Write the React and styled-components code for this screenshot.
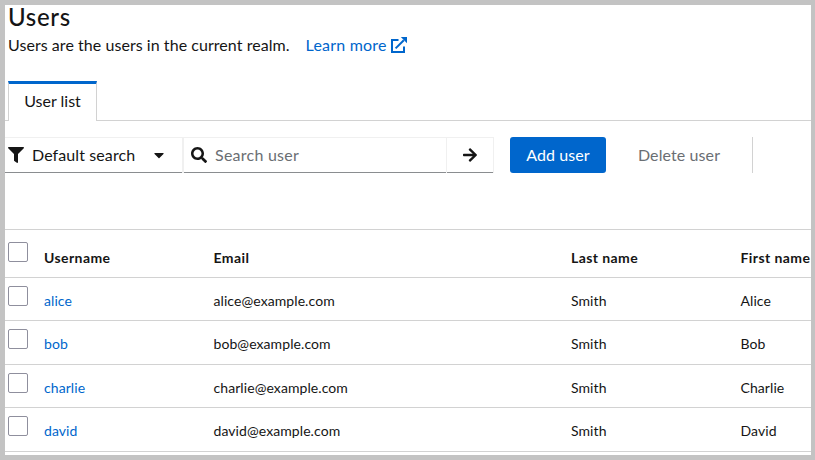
import React from "react";
import styled, { createGlobalStyle } from "styled-components";
import { FaFilter, FaCaretDown, FaSearch, FaArrowRight } from "react-icons/fa";

const GlobalStyle = createGlobalStyle`
  * { box-sizing: border-box; }
  body { margin: 0; background: #fff; color: #151515; font: 16px/24px Lato, sans-serif; }
`;

const Frame = styled.main`
  width: 815px;
  height: 460px;
  border: 5px solid #c3c3c3;
  border-right-width: 4px;
  background: #fff;
  overflow: hidden;
  white-space: nowrap;
`;

const Header = styled.header`
  height: 76px;
  padding-left: 3px;
`;

const Title = styled.h1`
  margin: 0;
  height: 27px;
  font-size: 24px;
  font-weight: 500;
  line-height: 24px;
  letter-spacing: 0.7px;
`;

const Description = styled.p`
  margin: 0;
  display: flex;
  align-items: center;
  line-height: 25px;
  letter-spacing: 0.05px;
`;

const LearnMore = styled.a`
  display: flex;
  align-items: center;
  gap: 4px;
  margin-left: 16px;
  color: #06c;
  letter-spacing: 0.2px;
  svg { display: block; }
`;

const Tabs = styled.nav`
  display: flex;
  height: 40px;
  padding-left: 3px;
  box-shadow: inset 0 -1px #d2d2d2;
`;

const Tab = styled.div`
  width: 89px;
  border: 1px solid #d2d2d2;
  border-top: 3px solid #06c;
  border-bottom: 0;
  background: #fff;
  text-align: center;
  line-height: 33px;
`;

const Toolbar = styled.div`
  display: flex;
  height: 36px;
  margin-top: 16px;
`;

const Field = styled.div`
  display: flex;
  align-items: center;
  width: ${(p) => p.$width}px;
  padding: 0 0 2px ${(p) => p.$inset}px;
  border-top: 1px solid #f0f0f0;
  border-right: ${(p) => p.$divider}px solid #f0f0f0;
  box-shadow: inset 0 -1px #8a8d90;
`;

const Label = styled.span`
  margin-left: 8px;
  width: ${(p) => p.$width || "auto"};
  color: ${(p) => (p.$muted ? "#6a6e73" : "#151515")};
  letter-spacing: ${(p) => p.$tracking}px;
`;

const Button = styled.button`
  height: 36px;
  width: ${(p) => p.$width}px;
  margin-left: 16px;
  padding: 0;
  border: 0;
  border-radius: 3px;
  background: ${(p) => (p.$primary ? "#06c" : "transparent")};
  color: ${(p) => (p.$primary ? "#fff" : "#6a6e73")};
  font: 16px/36px Lato, sans-serif;
  letter-spacing: 0.1px;
`;

const Divider = styled.div`
  width: 1px;
  margin-left: 16px;
  background: #d2d2d2;
`;

const Table = styled.div`
  margin-top: 56px;
  border-top: 1px solid #d2d2d2;
  font-size: 14px;
`;

const Row = styled.div`
  display: grid;
  grid-template-columns: 36px 169.5px 357.5px 169.5px 1fr;
  height: ${(p) => p.$height}px;
  padding-left: 3px;
  border-bottom: 1px solid #d2d2d2;
  font-weight: ${(p) => (p.$head ? 700 : 400)};
  line-height: ${(p) => (p.$head ? 56 : 45)}px;
  letter-spacing: ${(p) => (p.$head ? 0.42 : 0.08)}px;
`;

const Checkbox = styled.input`
  appearance: none;
  width: 20px;
  height: 20px;
  margin: ${(p) => p.$top}px 0 0;
  border: 1px solid #8f8f9d;
  border-radius: 2px;
  background: #fff;
`;

const UserLink = styled.a`
  color: #06c;
`;

const ExternalLinkIcon = () => (
  <svg width="16" height="16" viewBox="0 0 16 16" fill="none" stroke="#06c" strokeWidth="2">
    <path d="M7.5 3H1V15H13V9.5" />
    <path d="M4.6 11.4L12.8 3.2" />
    <path d="M9.8 0H16V6.2Z" fill="#06c" stroke="none" />
  </svg>
);

const users = [
  { username: "alice", last: "Smith", first: "Alice", height: 43 },
  { username: "bob", last: "Smith", first: "Bob", height: 44 },
  { username: "charlie", last: "Smith", first: "Charlie", height: 43 },
  { username: "david", last: "Smith", first: "David", height: 44 },
];

export default function App() {
  return (
    <>
      <GlobalStyle />
      <Frame>
        <Header>
          <Title>Users</Title>
          <Description>
            Users are the users in the current realm.
            <LearnMore>
              Learn more
              <ExternalLinkIcon />
            </LearnMore>
          </Description>
        </Header>
        <Tabs>
          <Tab>User list</Tab>
        </Tabs>
        <Toolbar>
          <Field $width={179} $inset={3} $divider={2}>
            <FaFilter size={16} />
            <Label $width="119px" $tracking={0.1}>Default search</Label>
            <FaCaretDown size={16} />
          </Field>
          <Field $width={263} $inset={7} $divider={1}>
            <FaSearch size={16} />
            <Label $muted $tracking={0.25}>Search user</Label>
          </Field>
          <Field $width={47} $inset={15} $divider={1}>
            <FaArrowRight size={16} />
          </Field>
          <Button $primary $width={96}>Add user</Button>
          <Button $width={114}>Delete user</Button>
          <Divider />
        </Toolbar>
        <Table>
          <Row $head $height={48}>
            <Checkbox type="checkbox" $top={12} />
            <span>Username</span>
            <span>Email</span>
            <span>Last name</span>
            <span>First name</span>
          </Row>
          {users.map((u) => (
            <Row key={u.username} $height={u.height}>
              <Checkbox type="checkbox" $top={8} />
              <UserLink>{u.username}</UserLink>
              <span>{u.username}@example.com</span>
              <span>{u.last}</span>
              <span>{u.first}</span>
            </Row>
          ))}
        </Table>
      </Frame>
    </>
  );
}
